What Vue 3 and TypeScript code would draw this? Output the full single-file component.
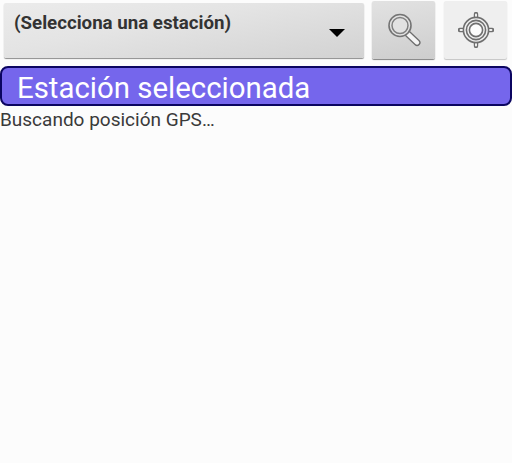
<script setup lang="ts">
const title: string = 'Estación seleccionada'
</script>

<template>
  <div class="page">
    <div class="toolbar">
      <div class="spinner">
        <span class="spinner-text">(Selecciona una estación)</span>
        <span class="arrow"></span>
      </div>
      <button class="btn search" type="button" aria-label="Buscar">
        <svg width="36" height="36" viewBox="0 0 36 36" fill="none">
          <path d="M22 22 L31 30.5" stroke="#6e6e6e" stroke-width="7" stroke-linecap="round"/>
          <path d="M22 22 L31 30.5" stroke="#f4f4f4" stroke-width="4.4" stroke-linecap="round"/>
          <circle cx="14" cy="13.5" r="11" fill="#e2e2e2" stroke="#747474" stroke-width="1.6"/>
          <circle cx="14" cy="13.5" r="8" fill="#e2e2e2" stroke="#808080" stroke-width="1.5"/>
        </svg>
      </button>
      <button class="btn gps" type="button" aria-label="Posición GPS">
        <svg width="36" height="36" viewBox="0 0 36 36" fill="none">
          <path d="M18 2 V8 M18 28 V34 M2 18 H8 M28 18 H34" stroke="#6f6f6f" stroke-width="4.4" stroke-linecap="round"/>
          <path d="M18 2.6 V8 M18 28 V33.4 M2.6 18 H8 M28 18 H33.4" stroke="#f0f0f0" stroke-width="2" stroke-linecap="round"/>
          <circle cx="18" cy="18" r="12.6" fill="#f0f0f0" stroke="#6f6f6f" stroke-width="1.6"/>
          <circle cx="18" cy="18" r="9.6" fill="#f0f0f0" stroke="#6f6f6f" stroke-width="1.6"/>
          <circle cx="18" cy="18" r="6.6" fill="#fcfcfc" stroke="#6f6f6f" stroke-width="1.6"/>
        </svg>
      </button>
    </div>
    <div class="banner">{{ title }}</div>
    <div class="status">Buscando posición GPS…</div>
  </div>
</template>

<style>
html, body { margin: 0; background: #fcfcfc; }
</style>

<style scoped>
.page {
  width: 512px;
  height: 463px;
  overflow: hidden;
  background: #fcfcfc;
  font-family: Roboto, "Open Sans", sans-serif;
  display: flex;
  flex-direction: column;
}
.toolbar {
  display: flex;
  align-items: flex-start;
  height: 66px;
  padding: 1px 0 0 4px;
  box-sizing: border-box;
}
.spinner {
  width: 360px;
  height: 55px;
  margin-top: 2px;
  box-sizing: border-box;
  border-radius: 2px;
  background: linear-gradient(170deg, #ebebeb 0%, #e4e4e4 40%, #d2d2d2 100%);
  box-shadow: 0 1px 1px #8c8c8c;
  position: relative;
  padding: 8px 0 0 10px;
  color: #333;
  font-weight: 700;
  font-size: 18.7px;
  line-height: 24px;
  flex: none;
}
.spinner-text { display: block; }
.arrow {
  position: absolute;
  left: 325px;
  top: 26px;
  width: 0;
  height: 0;
  border-left: 8px solid transparent;
  border-right: 8px solid transparent;
  border-top: 8px solid #000;
}
.btn {
  width: 63px;
  height: 58px;
  border: 0;
  padding: 0;
  border-radius: 2px;
  margin-left: 8px;
  display: flex;
  align-items: center;
  justify-content: center;
  flex: none;
}
.search {
  background: linear-gradient(170deg, #e2e2e2 0%, #d8d8d8 50%, #cdcdcd 100%);
  box-shadow: 0 1px 1px #808080;
}
.gps {
  margin-left: 9px;
  background: #efefef;
  box-shadow: 0 1px 1px #c4c4c4;
}
.banner {
  margin-left: 0;
  width: 512px;
  height: 40px;
  box-sizing: border-box;
  background: #7566ec;
  border: 2px solid #0b0560;
  border-radius: 8px;
  color: #fff;
  font-size: 29.4px;
  line-height: 40px;
  padding-left: 15px;
  flex: none;
}
.status {
  color: #3a3a3a;
  font-size: 19px;
  line-height: 24px;
  margin-top: 2px;
  padding-left: 0;
}
</style>
